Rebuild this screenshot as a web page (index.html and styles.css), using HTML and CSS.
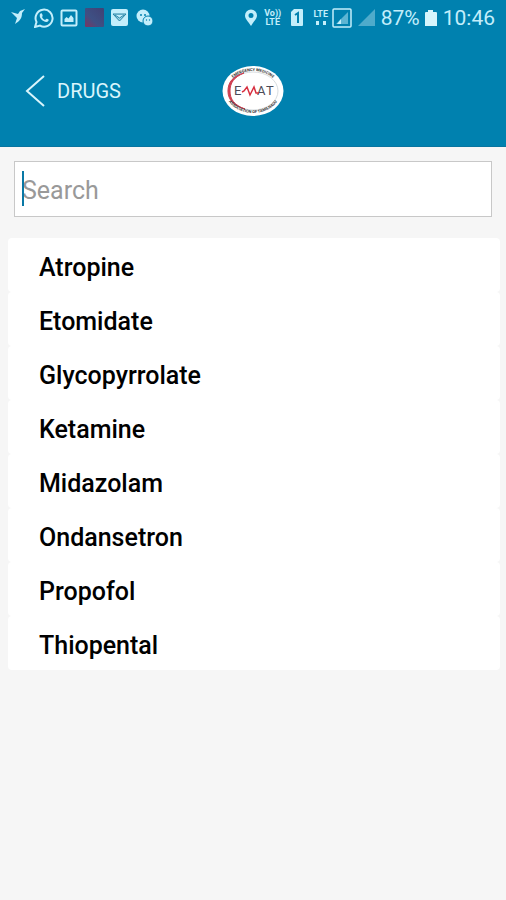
FILE: index.html
```
<!DOCTYPE html>
<html lang="en">
<head>
    <meta charset="UTF-8">
    <meta name="viewport" content="width=device-width, initial-scale=1.0">
    <title>Drugs</title>
    <link rel="stylesheet" href="styles.css">
</head>
<body>
    <header class="header">
        <div class="status-bar">
            <div class="notifications">
                <svg width="20" height="20" viewBox="0 0 20 20" fill="#c3eefb"><path d="M2 4l7 2 2-3 5-2-3 4c0 5-2 8-7 11l2-6z"/></svg>
                <svg width="20" height="20" viewBox="0 0 20 20"><path d="M1 19l1.500-5A8.500 8.500 0 1 1 6 17.600z" fill="none" stroke="#c3eefb" stroke-width="2"/><path d="M6 6c1-1 2-1 2.500 1s-.5 1.500-.5 2c.5 1.500 2 2.500 3 3 .8 0 1-1.500 2-1.200 2 .8 2 1.200 1.300 2.200-1 1.500-3 1-4.800 0C7 11.500 5 9 6 6z" fill="#c3eefb"/></svg>
                <svg width="20" height="20" viewBox="0 0 20 20"><rect x="2.500" y="2.500" width="15" height="15" rx="1" fill="none" stroke="#c3eefb" stroke-width="2"/><path d="M5.500 14V11l2-2 2 1.500L12 7l2.500 3v4z" fill="#c3eefb"/></svg>
                <svg width="20" height="20" viewBox="0 0 20 20"><defs><linearGradient id="app" x1="0" y1="1" x2="1" y2="0"><stop offset="0" stop-color="#7b3561"/><stop offset=".4" stop-color="#3e5084"/><stop offset="1" stop-color="#414174"/></linearGradient></defs><rect x="1" y="0" width="19" height="19" rx="1" fill="url(#app)"/></svg>
                <svg width="20" height="20" viewBox="0 0 20 20"><rect x="2" y="1" width="17" height="17" rx="2" fill="#c3eefb"/><path d="M4 6h13l-6.500 7zM6 7l4.500 3L15 7" fill="#9bd5e8" stroke="#2684a5" stroke-width="1"/></svg>
                <svg width="20" height="20" viewBox="0 0 20 20"><circle cx="9" cy="8" r="6.500" fill="#c3eefb"/><circle cx="14" cy="13" r="5" fill="#c3eefb" stroke="#0081af"/><g fill="#0081af"><circle cx="7" cy="7" r="1"/><circle cx="11" cy="7" r="1"/><circle cx="12.500" cy="12" r=".7"/><circle cx="15.500" cy="12" r=".7"/></g></svg>
            </div>
            <div class="system">
                <svg width="14" height="20" viewBox="0 0 14 20"><path d="M7 18C4 13 1 11 1 7.500a6 6 0 0 1 12 0C13 11 10 13 7 18zM7 5a2.500 2.500 0 1 0 0 5 2.500 2.500 0 0 0 0-5z" fill="#c3eefb" fill-rule="evenodd"/></svg>
                <span class="network"><span>Vo))</span><span>LTE</span></span>
                <svg class="sim" width="14" height="20" viewBox="0 0 14 20"><path d="M4 1h8q1 0 1 1v15q0 1-1 1H2q-1 0-1-1V4z" fill="#c3eefb"/><path d="M5 7l3-2v10" fill="none" stroke="#0081af" stroke-width="2"/></svg>
                <span class="network lte"><span>LTE</span><svg width="12" height="6" viewBox="0 0 12 6" fill="#c3eefb"><path d="M1 1h3v4H1zM8 1h3v4H8z"/></svg></span>
                <svg width="20" height="20" viewBox="0 0 20 20"><rect x="1" y="1" width="18" height="18" rx="1" fill="none" stroke="#c3eefb" stroke-width="1.500"/><path d="M16 4v12H4z" fill="#5db5d3"/><path d="M9 11v5H5z" fill="#c3eefb"/></svg>
                <svg width="17" height="20" viewBox="0 0 17 20"><path d="M17 1v17H0z" fill="#4fabcb"/></svg>
                <span class="battery-level">87%</span>
                <svg width="13" height="20" viewBox="0 0 13 20"><path d="M4 2h5v2h3q1 0 1 1v13H1V5q0-1 1-1h2z" fill="#d6f5fc"/></svg>
                <time class="clock">10:46</time>
            </div>
        </div>
        <nav class="nav">
            <a class="back" href="#">
                <svg width="20" height="32" viewBox="0 0 20 32"><path d="M19 1L2 16l17 15" fill="none" stroke="#d9f5fc" stroke-width="2"/></svg>
                DRUGS
            </a>
            <svg class="logo" width="62" height="52" viewBox="0 0 62 52" role="img" aria-label="EMAT">
                <defs>
                    <path id="arc-top" d="M5 26A26 20 0 0 1 57 26"/>
                    <path id="arc-bottom" d="M3 25A28 23 0 0 0 59 25"/>
                </defs>
                <ellipse cx="31" cy="26" rx="30.500" ry="25" fill="#fff"/>
                <ellipse cx="31" cy="26" rx="25" ry="19" fill="none" stroke="#d8dde0" stroke-width="1"/>
                <path d="M22 8C11 11 6 17 6 26s6 15 17 18C12 40 8 34 8 26S12 12 22 8z" fill="#cf3f50" stroke="#cf3f50"/>
                <text class="logo-ring"><textPath href="#arc-top" startOffset="50%" text-anchor="middle">EMERGENCY MEDICINE</textPath></text>
                <text class="logo-ring"><textPath href="#arc-bottom" startOffset="50%" text-anchor="middle">ASSOCIATION OF TAMILNADU</textPath></text>
                <g class="logo-name"><text x="12" y="30">E</text><text x="35" y="30">A</text><text x="44" y="30">T</text></g>
                <path d="M20 27l2-1 3-4 3 8 4-8 2 6h3" fill="none" stroke="#d72f40" stroke-width="1.500"/>
            </svg>
        </nav>
    </header>

    <main class="content">
        <div class="search">
            <input class="search-input" type="text" placeholder="Search" aria-label="Search">
            <span class="caret"></span>
        </div>
        <ul class="drug-list">
            <li><a href="#">Atropine</a></li>
            <li><a href="#">Etomidate</a></li>
            <li><a href="#">Glycopyrrolate</a></li>
            <li><a href="#">Ketamine</a></li>
            <li><a href="#">Midazolam</a></li>
            <li><a href="#">Ondansetron</a></li>
            <li><a href="#">Propofol</a></li>
            <li><a href="#">Thiopental</a></li>
        </ul>
    </main>
</body>
</html>
```
FILE: styles.css
```
* {
    box-sizing: border-box;
}
body {
    margin: 0;
    min-height: 100vh;
    background-color: #f6f6f6;
    font-family: Roboto, "Liberation Sans", sans-serif;
}
a {
    color: inherit;
    text-decoration: none;
}
svg {
    display: block;
    flex-shrink: 0;
}
.header {
    background-color: #0081af;
    color: #d9f5fc;
    border-bottom: 1px solid #0875a0;
}
.status-bar {
    display: flex;
    justify-content: space-between;
    align-items: center;
    height: 36px;
    padding: 0 11px 0 9px;
    color: #c3eefb;
}
.notifications {
    display: flex;
    gap: 5px;
}
.system {
    display: flex;
    align-items: center;
    gap: 6px;
}
.network {
    display: flex;
    flex-direction: column;
    align-items: center;
    width: 18px;
    font-size: 9px;
    line-height: 9px;
    font-weight: 700;
}
.lte {
    gap: 1px;
    margin-right: -4px;
}
.sim {
    margin: 0 2px;
}
.battery-level,
.clock {
    font-size: 21px;
    line-height: 36px;
}
.battery-level {
    margin-right: -2px;
}
.nav {
    display: grid;
    grid-template-columns: 1fr auto 1fr;
    align-items: center;
    height: 110px;
    padding: 0 25px;
}
.back {
    display: flex;
    align-items: center;
    gap: 12px;
    font-size: 20px;
}
.logo-ring {
    font-size: 4px;
    font-weight: 700;
    fill: #333;
}
.logo-name {
    font-size: 13px;
    fill: #4c4c58;
}
.content {
    padding: 14px 6px 14px 8px;
}
.search {
    position: relative;
    margin: 0 8px 21px 6px;
}
.search-input {
    display: block;
    width: 100%;
    height: 56px;
    padding: 2px 7px 0;
    border: 1px solid #c8c8c8;
    border-radius: 0;
    background-color: #fff;
    font-family: inherit;
    font-size: 25px;
    outline: none;
}
.search-input::placeholder {
    color: #999;
    opacity: 1;
}
.caret {
    position: absolute;
    top: 10px;
    left: 8px;
    width: 2px;
    height: 35px;
    background-color: #0878a5;
}
.drug-list {
    margin: 0;
    padding: 0;
    list-style: none;
}
.drug-list li {
    border-radius: 4px;
    background-color: #fff;
}
.drug-list a {
    display: block;
    padding: 5px 31px 0;
    color: #000;
    font-size: 25px;
    font-weight: 500;
    line-height: 49px;
}
```
